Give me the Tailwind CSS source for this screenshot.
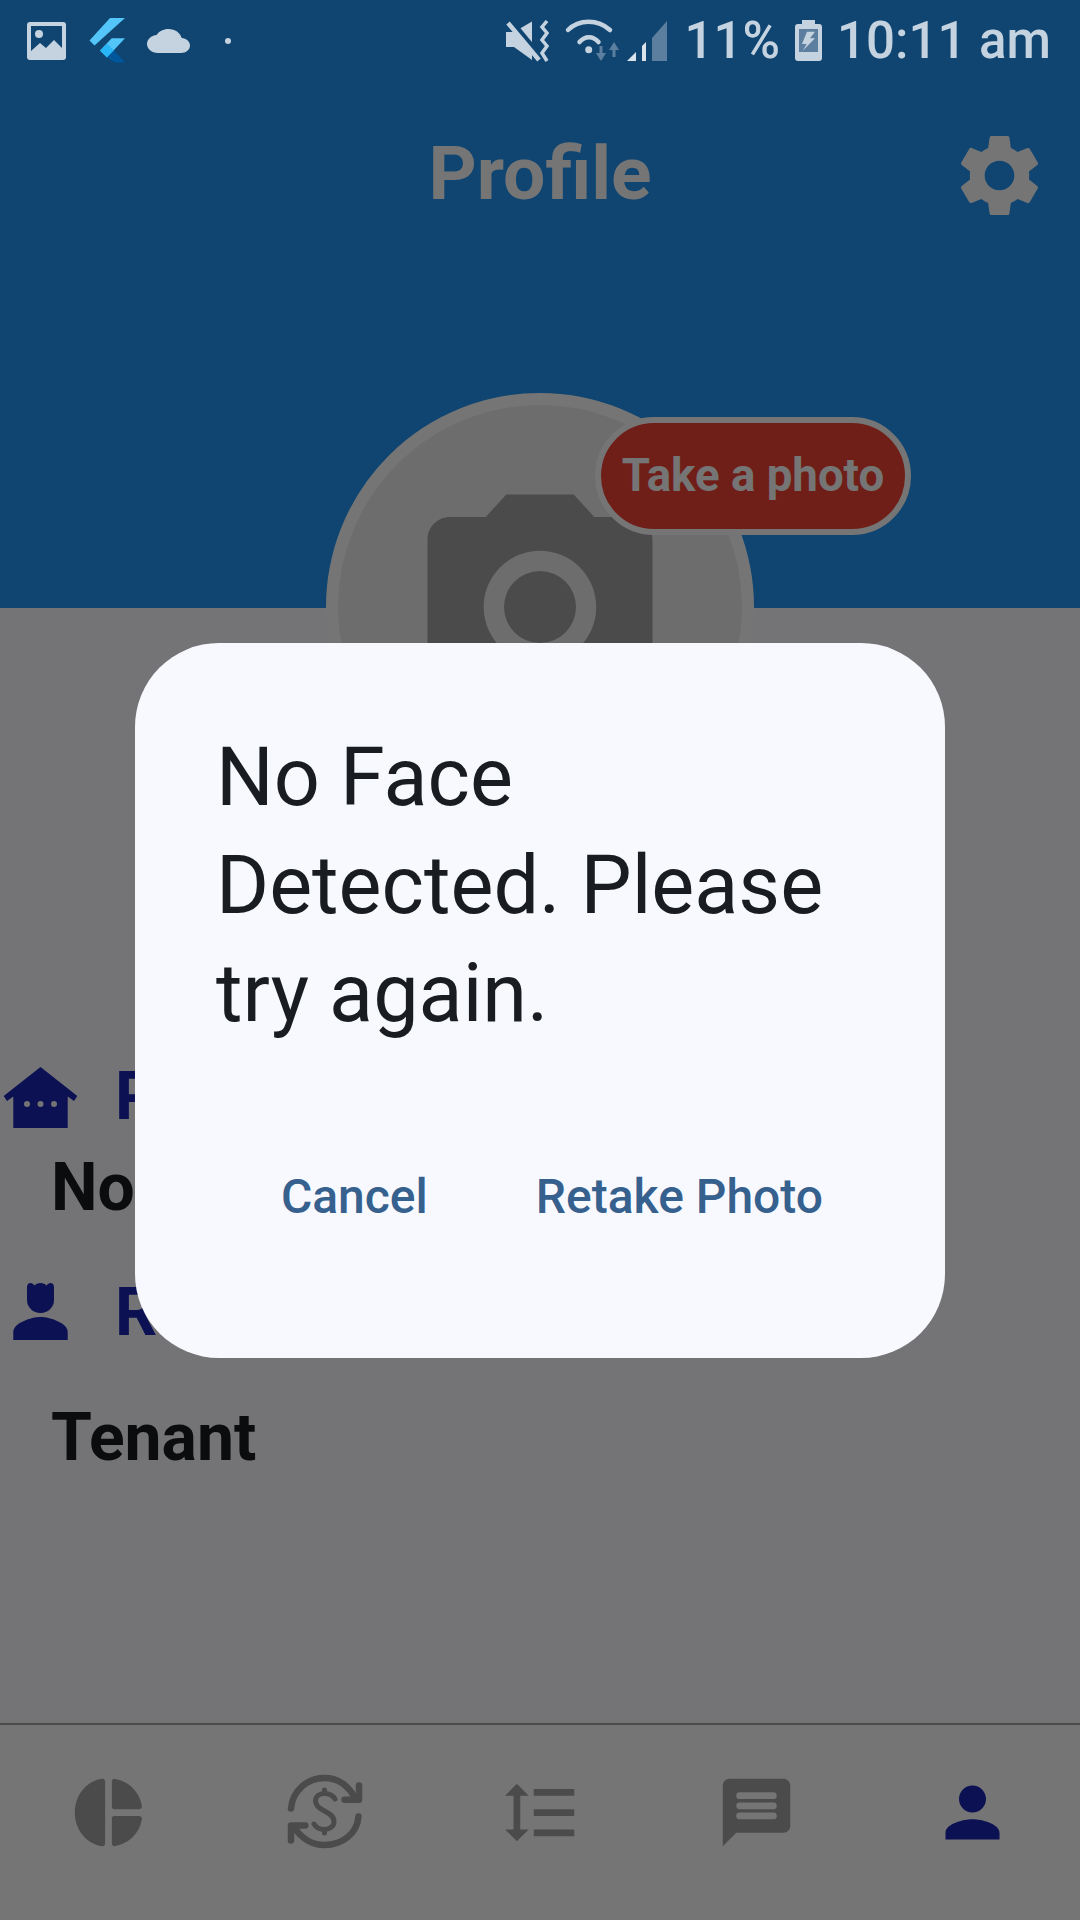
<!DOCTYPE html>
<html lang="en">
<head>
    <meta charset="UTF-8">
    <meta name="viewport" content="width=device-width, initial-scale=1.0">
    <title>Profile</title>
    <script src="https://cdn.jsdelivr.net/npm/@tailwindcss/browser@4"></script>
</head>
<body class="font-['Roboto',sans-serif]">

    <div class="relative w-[1080px] h-[1920px] overflow-hidden bg-[#fdfbff] flex flex-col">

        <!-- Page under the dialog -->
        <main class="relative flex-1">
            <header class="h-[608px] bg-[#2196f3] pt-[127px]">
                <div class="flex items-center justify-between pl-[31px] pr-[31px] h-[96px]">
                    <div class="w-[99px]"></div>
                    <h1 class="mb-[5px] text-white font-bold text-[75px] leading-[96px]">Profile</h1>
                    <svg class="w-[99px] h-[99px] fill-white" viewBox="0 0 24 24"><path d="M19.14 12.94c.04-.3.06-.61.06-.94 0-.32-.02-.64-.07-.94l2.03-1.58c.18-.14.23-.41.12-.61l-1.92-3.32c-.12-.22-.37-.29-.59-.22l-2.39.96c-.5-.38-1.03-.7-1.62-.94l-.36-2.54c-.04-.24-.24-.41-.48-.41h-3.84c-.24 0-.43.17-.47.41l-.36 2.54c-.59.24-1.13.57-1.62.94l-2.39-.96c-.22-.08-.47 0-.59.22L2.74 8.87c-.12.21-.08.47.12.61l2.03 1.58c-.05.3-.09.63-.09.94s.02.64.07.94l-2.03 1.58c-.18.14-.23.41-.12.61l1.92 3.32c.12.22.37.29.59.22l2.39-.96c.5.38 1.03.7 1.62.94l.36 2.54c.05.24.24.41.48.41h3.84c.24 0 .44-.17.47-.41l.36-2.54c.59-.24 1.13-.56 1.62-.94l2.39.96c.22.08.47 0 .59-.22l1.92-3.32c.12-.22.07-.47-.12-.61l-2.01-1.58zM12 15.6c-1.98 0-3.6-1.62-3.6-3.6s1.62-3.6 3.6-3.6 3.6 1.62 3.6 3.6-1.62 3.6-3.6 3.6z"/></svg>
                </div>
            </header>

            <!-- Avatar -->
            <div class="absolute left-[326px] top-[393px] w-[428px] h-[428px] rounded-full border-[12px] border-white bg-[#eeeeee] flex items-center justify-center">
                <svg class="w-[270px] h-[270px] fill-[#a3a3a3]" viewBox="0 0 24 24"><circle cx="12" cy="12" r="3.2"/><path d="M9 2L7.17 4H4c-1.1 0-2 .9-2 2v12c0 1.1.9 2 2 2h16c1.1 0 2-.9 2-2V6c0-1.1-.9-2-2-2h-3.17L15 2H9zm3 15c-2.76 0-5-2.24-5-5s2.24-5 5-5 5 2.24 5 5-2.24 5-5 5z"/></svg>
            </div>
            <div class="absolute left-[595px] top-[417px] w-[316px] h-[118px] rounded-full border-[6px] border-white bg-[#f44336] flex items-center justify-center text-white font-bold text-[45.6px]">Take a photo</div>

            <!-- Details -->
            <section class="mt-[444px] pl-[51px]">
                <div class="-ml-[51px] flex items-center gap-[34px] h-[90px]">
                    <svg class="w-[81px] h-[81px] shrink-0" viewBox="0 0 81 81"><path class="fill-[#1a25b2]" d="M40.5 10L77.3 39L74 44L67.7 39.5V71H13.3V39.5L7 44L3.7 39Z"/><circle class="fill-[#fdfbff]" cx="27" cy="47" r="3"/><circle class="fill-[#fdfbff]" cx="40.5" cy="47" r="3"/><circle class="fill-[#fdfbff]" cx="54" cy="47" r="3"/></svg>
                    <span class="text-[#1a25b2] font-bold text-[66px] leading-[90px]">Property</span>
                </div>
                <p class="mt-px text-[#1a1c1e] font-bold text-[66px] leading-[90px]">None</p>
                <div class="-ml-[51px] mt-[35px] flex items-center gap-[34px] h-[90px]">
                    <svg class="w-[81px] h-[81px] shrink-0 fill-[#1a25b2]" viewBox="0 0 81 81"><path d="M27 14c0-2.500 1.500-4 3.500-4c1.500 0 3 1 4 2.500c1-1.500 3.500-2.500 6-2.500s5 1 6 2.500c1-1.500 2.500-2.500 4-2.500c2 0 3.500 1.500 3.500 4V27a13.500 13 0 0 1-27 0Z"/><path d="M13.300 67v-8c0-9 18-15 27.200-15s27.200 6 27.200 15v8z"/></svg>
                    <span class="text-[#1a25b2] font-bold text-[66px] leading-[90px]">Role</span>
                </div>
                <p class="mt-[35px] text-[#1a1c1e] font-bold text-[66px] leading-[90px]">Tenant</p>
            </section>
        </main>

        <!-- Bottom nav -->
        <nav class="h-[197px] shrink-0 bg-white border-t-2 border-[#a3a3a3] grid grid-cols-5 items-center pb-[21px]">
            <div class="flex justify-center">
                <svg class="w-[81px] h-[81px] fill-[#a3a3a3]" viewBox="0 0 24 24"><path d="M11 2.800v18.400c0 .5-.4.850-.9.800C5.500 21.400 2 17.100 2 12S5.500 2.600 10.100 2c.5-.05.9.3.9.8z"/><path d="M13 2.800c0-.5.4-.85.9-.75 4.100.6 7.400 3.900 8 8 .05.5-.3.95-.8.95H13.600a.6.6 0 0 1-.6-.6z"/><path d="M13 13.600c0-.3.3-.6.6-.6h7.500c.5 0 .85.45.8.95-.6 4.100-3.900 7.400-8 8-.5.1-.9-.25-.9-.75z"/></svg>
            </div>
            <div class="flex justify-center">
                <svg class="w-[81px] h-[81px] fill-none stroke-[#a3a3a3]" viewBox="0 0 81 81" stroke-linecap="round" stroke-linejoin="round">
                    <path stroke-width="6.500" d="M7 36.500C8.500 19 23 6 40.500 6C53 6 64 13 71 26"/>
                    <path stroke-width="6.500" d="M75 13.500V27.800H60.600"/>
                    <path stroke-width="6.500" d="M74.500 44.500C73 62 58 73 40.500 73C28 73 17 66 10 55"/>
                    <path stroke-width="6.500" d="M7 68.500V53.500H21.300"/>
                    <path stroke-width="5" d="M51 27c-2-3.500-6-5.500-10.500-5.500C35 21.500 31.500 24.500 31.500 29c0 5 4 7.500 9 10s9.500 5 9.500 10.500c0 4.500-4 8-9.500 8-5 0-8.500-2-10.500-5.500"/>
                    <path stroke-width="5" d="M40.500 18v3.500M40.500 57.500V61"/>
                </svg>
            </div>
            <div class="flex justify-center">
                <svg class="w-[81px] h-[81px] fill-[#a3a3a3]" viewBox="0 0 24 24"><path d="M6 7h2.500L5 3.500 1.500 7H4v10H1.500L5 20.500 8.500 17H6V7zm4-2v2h12V5H10zm0 14h12v-2H10v2zm0-6h12v-2H10v2z"/></svg>
            </div>
            <div class="flex justify-center">
                <svg class="w-[81px] h-[81px]" viewBox="0 0 24 24"><path class="fill-[#a3a3a3]" d="M20 2H4c-1.100 0-1.990.9-1.990 2L2 22l4-4h14c1.100 0 2-.9 2-2V4c0-1.100-.9-2-2-2z"/><rect class="fill-white" x="6" y="6" width="12" height="2" rx="1"/><rect class="fill-white" x="6" y="9" width="12" height="2" rx="1"/><rect class="fill-white" x="6" y="12" width="12" height="2" rx="1"/></svg>
            </div>
            <div class="flex justify-center">
                <svg class="w-[81px] h-[81px] fill-[#1a25b2]" viewBox="0 0 24 24"><path d="M12 12c2.210 0 4-1.790 4-4s-1.790-4-4-4-4 1.790-4 4 1.790 4 4 4zm0 2c-2.670 0-8 1.340-8 4v2h16v-2c0-2.660-5.330-4-8-4z"/></svg>
            </div>
        </nav>

        <!-- Scrim -->
        <div class="absolute inset-0 bg-black/54"></div>

        <!-- Status bar -->
        <div class="absolute top-0 left-0 right-0 h-[81px] flex items-center justify-between pl-[27px] pr-[29px] text-[#c5d3e0]">
            <div class="flex items-center">
                <svg class="w-[39px] h-[38px]" viewBox="0 0 39 38"><rect class="fill-[#c5d3e0]" width="39" height="38" rx="3"/><rect class="fill-[#0f4570]" x="4" y="4" width="31" height="29"/><path class="fill-[#c5d3e0]" d="M4 29L13 21L19 26L27 18L35 26V34H4Z"/><circle class="fill-[#c5d3e0]" cx="12" cy="12" r="4"/></svg>
                <svg class="ml-[23px] w-[36px] h-[45px]" viewBox="0 0 36 45"><path class="fill-[#54c5f8]" d="M36 0H21L.5 22.500L5.500 27.500Z"/><path class="fill-[#54c5f8]" d="M36 20.300H22.700L11 32.500L18 39.500Z"/><path class="fill-[#29b6f6]" d="M11 32.500L18 25.500L25 32.500L18 39.500Z"/><path class="fill-[#01579b]" d="M18 39.500L25 32.500L36 44.500H26Z"/></svg>
                <svg class="ml-[22px] w-[43px] h-[24px] fill-[#c5d3e0]" viewBox="0 4 24 16" preserveAspectRatio="none"><path d="M19.350 10.040C18.670 6.590 15.640 4 12 4 9.110 4 6.600 5.640 5.350 8.040 2.340 8.360 0 10.910 0 14c0 3.310 2.690 6 6 6h13c2.760 0 5-2.240 5-5 0-2.640-2.050-4.780-4.650-4.960z"/></svg>
                <div class="ml-[35px] w-[6px] h-[6px] rounded-full bg-[#c5d3e0]"></div>
            </div>
            <div class="flex items-center">
                <svg class="w-[170px] h-[50px]" viewBox="505 17 170 50" fill="none">
                    <path fill="#c5d3e0" d="M508 33H516L534 22.500V61L516 48H508Z"/>
                    <path stroke="#0f4570" stroke-width="7" d="M512 22L545 62"/>
                    <path stroke="#c5d3e0" stroke-width="4.500" d="M510 24L541 61"/>
                    <path stroke="#c5d3e0" stroke-width="3.500" d="M549 22L544 28L549 34L544 41L549 47L544 54L549 62"/>
                    <path stroke="#c5d3e0" stroke-width="4.500" stroke-linecap="round" d="M570 31C581 20 600 20 612 31"/>
                    <path stroke="#c5d3e0" stroke-width="4.500" stroke-linecap="round" d="M581.500 43C587 36.500 595 36.500 600.500 43"/>
                    <circle cx="590.700" cy="50.700" r="3.500" fill="#c5d3e0"/>
                    <path stroke="#5c7f9f" stroke-width="3" d="M603 47V60"/>
                    <path fill="#5c7f9f" d="M598 54H608L603 62Z"/>
                    <path stroke="#5c7f9f" stroke-width="3" d="M616 46V58"/>
                    <path fill="#5c7f9f" d="M611 51H621L616 43Z"/>
                    <path fill="#ffffff" fill-opacity=".85" d="M629 62L638 53V62Z"/>
                    <path fill="#ffffff" fill-opacity=".85" d="M644 47L648 43V62H644Z"/>
                    <path fill="#5c7f9f" d="M654 39L669 22V62H654Z"/>
                </svg>
                <span class="ml-[11px] font-medium text-[51px] leading-[81px]">11%</span>
                <svg class="ml-[15px] w-[27px] h-[41px]" viewBox="0 0 27 41"><path class="fill-[#c5d3e0]" d="M7 0H20V4H24Q27 4 27 7V38Q27 41 24 41H3Q0 41 0 38V7Q0 4 3 4H7Z"/><rect class="fill-[#5c7f9f]" x="4" y="9" width="19" height="23"/><path class="fill-[#c5d3e0]" d="M20 11.700H12L7 24H11.700L7.700 30.700L20 18.300H15Z"/></svg>
                <span class="ml-[15px] font-medium text-[51px] leading-[81px]">10:11 am</span>
            </div>
        </div>

        <!-- Dialog -->
        <div class="absolute left-[135px] top-[643px] w-[810px] h-[715px] rounded-[84px] bg-[#f8f9ff] pt-[81px] pl-[81px] pr-[72px]">
            <h2 class="text-[#191c20] text-[81px] leading-[108px]">No Face Detected. Please try again.</h2>
            <div class="flex justify-end items-center gap-[108px] mt-[119px] pr-[50px] text-[#36618e] font-medium text-[48px] leading-[60px]">
                <button>Cancel</button>
                <button>Retake Photo</button>
            </div>
        </div>
    </div>

</body>
</html>
